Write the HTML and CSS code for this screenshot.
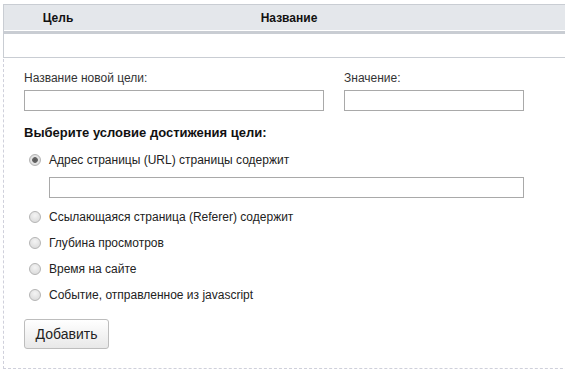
FILE: index.html
```html
<!DOCTYPE html>
<html lang="ru">
  <head>
    <meta charset="UTF-8" />
    <title>Цели</title>
    <link rel="stylesheet" href="styles.css">
  </head>
  <body>
    <div class="goals">
      <table class="goals-table">
        <thead>
          <tr>
            <th class="col-goal">Цель</th>
            <th class="col-name">Название</th>
            <th></th>
          </tr>
        </thead>
        <tbody>
          <tr>
            <td></td>
            <td></td>
            <td></td>
          </tr>
        </tbody>
      </table>

      <form class="goal-form">
        <div class="fields">
          <div class="field">
            <label>Название новой цели:</label>
            <input type="text" class="input-name" />
          </div>
          <div class="field">
            <label>Значение:</label>
            <input type="text" class="input-value" />
          </div>
        </div>

        <h3>Выберите условие достижения цели:</h3>

        <label class="option">
          <input type="radio" name="cond" checked />
          <span>Адрес страницы (URL) страницы содержит</span>
        </label>
        <input type="text" class="input-url" />

        <label class="option">
          <input type="radio" name="cond" />
          <span>Ссылающаяся страница (Referer) содержит</span>
        </label>
        <label class="option">
          <input type="radio" name="cond" />
          <span>Глубина просмотров</span>
        </label>
        <label class="option">
          <input type="radio" name="cond" />
          <span>Время на сайте</span>
        </label>
        <label class="option">
          <input type="radio" name="cond" />
          <span>Событие, отправленное из javascript</span>
        </label>

        <button type="button">Добавить</button>
      </form>
    </div>
  </body>
</html>
```

FILE: styles.css
```css
body {
  margin: 0;
  background: #fff;
  color: #222;
  font-family: "Liberation Sans", Arial, sans-serif;
  font-size: 12px;
  overflow: hidden;
}

.goals {
  padding: 4px 0 0 3px;
  width: 580px;
}

.goals-table {
  width: 100%;
  border-collapse: collapse;
  border-top: 1px solid #c9cdd3;
  border-left: 1px solid #c9cdd3;
}

.goals-table th {
  height: 26px;
  padding: 0;
  background: #e4e7eb;
  border-bottom: 3px solid #c9cdd3;
  box-shadow: inset 0 -1px 0 #fff;
  font-weight: bold;
  font-size: 12px;
  color: #111;
  text-align: center;
}

.goals-table .col-goal {
  width: 108px;
}

.goals-table .col-name {
  width: 354px;
}

.goals-table td {
  height: 23px;
  padding: 0;
  border-bottom: 1px solid #c9cdd3;
}

.goal-form {
  margin-top: 1px;
  padding: 12px 20px 19px 20px;
  border-left: 1px dashed #cfd0db;
  border-bottom: 1px dashed #cfd0db;
}

.fields {
  display: flex;
  gap: 20px;
}

.field label {
  display: block;
  line-height: 14px;
  color: #333;
  margin-bottom: 5px;
}

input[type="text"] {
  display: block;
  box-sizing: border-box;
  height: 21px;
  margin: 0;
  border: 1px solid #a9a9a9;
  background: #fff;
}

.input-name {
  width: 300px;
}

.input-value {
  width: 180px;
}

h3 {
  margin: 14px 0 11px;
  font-size: 13px;
  line-height: 16px;
  color: #111;
}

.option {
  display: flex;
  align-items: center;
  height: 16px;
  line-height: 16px;
  margin-bottom: 10px;
  color: #222;
}

.option input {
  appearance: none;
  box-sizing: border-box;
  width: 12px;
  height: 12px;
  margin: 0 8px 0 5px;
  border: 1px solid #b4b4b4;
  border-radius: 50%;
  background: radial-gradient(circle at 50% 35%, #f4f4f4, #d6d6d6);
}

.option input:checked {
  background: radial-gradient(circle, #555 0, #666 2.5px, #e6e6e6 3.2px, #d0d0d0);
}

.input-url {
  width: 475px;
  margin: -1px 0 11px 25px !important;
}

button {
  margin-top: 6px;
  width: 85px;
  height: 30px;
  padding: 0;
  border: 1px solid #bdbdbd;
  border-radius: 3px;
  background: linear-gradient(#ffffff, #e8e8e8);
  font-family: "Liberation Sans", Arial, sans-serif;
  font-size: 14px;
  color: #222;
  cursor: pointer;
}
```
